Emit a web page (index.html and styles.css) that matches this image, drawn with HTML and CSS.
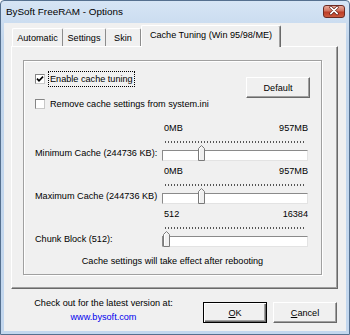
FILE: index.html
```html
<!DOCTYPE html>
<html>
<head>
<meta charset="utf-8">
<link rel="stylesheet" href="styles.css">
</head>
<body>
<div class="window">
  <div class="titlebar">
    <span class="title">BySoft FreeRAM - Options</span>
    <div class="close">
      <svg width="22" height="13" viewBox="0 0 22 13">
        <path d="M7.5 3 L14.5 10 M14.5 3 L7.5 10" stroke="#5a1a12" stroke-width="3.2" stroke-linecap="round"/>
        <path d="M7.5 3 L14.5 10 M14.5 3 L7.5 10" stroke="#fff" stroke-width="1.8" stroke-linecap="round"/>
      </svg>
    </div>
  </div>
  <div class="client">
    <div class="tabs">
      <div class="tab w1">Automatic</div>
      <div class="tab w2">Settings</div>
      <div class="tab w3">Skin</div>
      <div class="tab sel">Cache Tuning (Win 95/98/ME)</div>
    </div>
    <div class="panel">
      <div class="group">
        <div class="toprow">
          <div class="checks">
            <div class="check">
              <span class="box"><svg width="8" height="8" viewBox="0 0 8 8"><path d="M1 3.6 L3 5.8 L7 1.6" fill="none" stroke="#000" stroke-width="1.6"/></svg></span>
              <span class="focus">Enable cache tuning</span>
            </div>
            <div class="check second">
              <span class="box"></span>
              <span>Remove cache settings from system.ini</span>
            </div>
          </div>
          <div class="btn default">Default</div>
        </div>

        <div class="srow">
          <div class="slabel">Minimum Cache (244736 KB):</div>
          <div class="slider">
            <div class="scale"><span>0MB</span><span>957MB</span></div>
            <div class="ticks"></div>
            <div class="track">
              <svg class="thumb" style="left:35px" width="7" height="16" viewBox="0 0 7 16"><path d="M0.5 15.5 V3.5 L3.5 0.5 L6.5 3.5 V15.5 Z" fill="#f0f0f0" stroke="#7a7a7a"/><path d="M1.5 14.5 V3.9 L3.5 1.9" fill="none" stroke="#fff"/></svg>
            </div>
          </div>
        </div>

        <div class="srow">
          <div class="slabel">Maximum Cache (244736 KB)</div>
          <div class="slider">
            <div class="scale"><span>0MB</span><span>957MB</span></div>
            <div class="ticks"></div>
            <div class="track">
              <svg class="thumb" style="left:35px" width="7" height="16" viewBox="0 0 7 16"><path d="M0.5 15.5 V3.5 L3.5 0.5 L6.5 3.5 V15.5 Z" fill="#f0f0f0" stroke="#7a7a7a"/><path d="M1.5 14.5 V3.9 L3.5 1.9" fill="none" stroke="#fff"/></svg>
            </div>
          </div>
        </div>

        <div class="srow">
          <div class="slabel">Chunk Block (512):</div>
          <div class="slider">
            <div class="scale"><span>512</span><span>16384</span></div>
            <div class="ticks"></div>
            <div class="track">
              <svg class="thumb" style="left:0px" width="7" height="16" viewBox="0 0 7 16"><path d="M0.5 15.5 V3.5 L3.5 0.5 L6.5 3.5 V15.5 Z" fill="#f0f0f0" stroke="#7a7a7a"/><path d="M1.5 14.5 V3.9 L3.5 1.9" fill="none" stroke="#fff"/></svg>
            </div>
          </div>
        </div>

        <div class="note">Cache settings will take effect after rebooting</div>
      </div>
    </div>
    <div class="footer">
      <div class="info">
        <div>Check out for the latest version at:</div>
        <div class="link">www.bysoft.com</div>
      </div>
      <div class="btn ok"><span><u>O</u>K</span></div>
      <div class="btn cancel"><span><u>C</u>ancel</span></div>
    </div>
  </div>
</div>
</body>
</html>
```

FILE: styles.css
```css
html, body {
  margin: 0;
  padding: 0;
  background: #ffffff;
}

body {
  font-family: "Liberation Sans", Arial, sans-serif;
  font-size: 9.15px;
  color: #000;
}

.window {
  width: 350px;
  height: 335px;
  box-sizing: border-box;
  border: 1px solid #55708f;
  border-radius: 4px 4px 0 0;
  background: linear-gradient(#d6e5f5, #c2d6ec 40px, #c3d7ee);
  padding: 0 3px 3px 3px;
  display: flex;
  flex-direction: column;
}

.titlebar {
  height: 22px;
  flex: none;
  display: flex;
  align-items: center;
  justify-content: space-between;
}

.title {
  font-size: 9.9px;
  padding-left: 2px;
  padding-bottom: 1px;
  color: #000;
}

.close {
  width: 22px;
  height: 13px;
  margin-right: 1px;
  margin-bottom: 2px;
  box-sizing: border-box;
  border: 1px solid #6b2a22;
  border-radius: 3px;
  background: linear-gradient(#e9a99a, #d0705c 45%, #bd3d27 55%, #cc5b3f);
  display: flex;
  align-items: center;
  justify-content: center;
  overflow: hidden;
}

.close svg {
  display: block;
  margin-top: -1px;
}

.client {
  flex: 1;
  background: #f0f0f0;
  display: flex;
  flex-direction: column;
  border: 0;
}

/* tabs */
.tabs {
  height: 21px;
  margin: 2px 0 0 7px;
  padding-left: 1px;
  display: flex;
  align-items: flex-end;
}

.tab {
  height: 18px;
  box-sizing: border-box;
  border-top: 1px solid #fff;
  border-left: 1px solid #fff;
  border-right: 1px solid #8c8c8c;
  display: flex;
  align-items: center;
  justify-content: center;
  white-space: nowrap;
  border-radius: 2px 2px 0 0;
}

.w1 { width: 51px; }
.w2 { width: 43px; border-left: 0; }
.w3 { width: 35px; border-left: 0; }

.tab.sel {
  width: 140px;
  height: 22px;
  margin-bottom: -1px;
  padding-bottom: 3px;
  background: #f0f0f0;
  border-right: 1px solid #696969;
  box-shadow: inset -1px 0 0 #a0a0a0;
  position: relative;
  z-index: 1;
}

.panel {
  margin-left: 7px;
  width: 327px;
  height: 243px;
  box-sizing: border-box;
  border-top: 1px solid #fff;
  border-left: 1px solid #fff;
  border-right: 1px solid #696969;
  border-bottom: 1px solid #696969;
  box-shadow: inset -1px -1px 0 #a0a0a0;
  flex: none;
}

.group {
  margin: 13px 0 0 11px;
  width: 299px;
  height: 215px;
  box-sizing: border-box;
  border: 1px solid #a0a0a0;
  box-shadow: inset 1px 1px 0 #fff, 1px 1px 0 #fff;
  padding: 10px 11px 0 11px;
}

.toprow {
  height: 51px;
  display: flex;
  justify-content: space-between;
  align-items: flex-start;
}

.check {
  height: 15px;
  display: flex;
  align-items: center;
  white-space: nowrap;
}

.check.second {
  margin-top: 10px;
}

.box {
  width: 10px;
  height: 10px;
  box-sizing: border-box;
  border: 1px solid;
  border-color: #858585 #c8c8c8 #c8c8c8 #858585;
  background: #fff;
  margin-right: 5px;
  display: flex;
  align-items: center;
  justify-content: center;
  flex: none;
}

.box svg {
  display: block;
}

.focus {
  outline: 1px dotted #000;
  outline-offset: 0;
  padding: 1px 1px;
  margin-left: -1px;
  line-height: 12px;
}

.btn {
  box-sizing: border-box;
  width: 64px;
  height: 21px;
  background: #f0f0f0;
  border: 1px solid;
  border-color: #fff #696969 #696969 #fff;
  box-shadow: inset -1px -1px 0 #a0a0a0;
  display: flex;
  align-items: center;
  justify-content: center;
  white-space: nowrap;
}

.default {
  margin-top: 6px;
}

/* sliders */
.srow {
  height: 43px;
  display: grid;
  grid-template-columns: 127px 146px;
}

.slabel {
  margin-top: 25px;
  line-height: 13px;
  white-space: nowrap;
}

.slider {
  display: flex;
  flex-direction: column;
}

.scale {
  height: 13px;
  line-height: 13px;
  display: flex;
  justify-content: space-between;
  padding-left: 2px;
}

.ticks {
  height: 2px;
  margin: 6px 3px 0 3px;
  background: repeating-linear-gradient(90deg, #555 0, #555 1px, transparent 1px, transparent 3px);
}

.track {
  margin-top: 7px;
  height: 11px;
  box-sizing: border-box;
  border: 1px solid;
  border-color: #8a8a8a #e3e3e3 #e3e3e3 #8a8a8a;
  background: #fff;
  position: relative;
}

.thumb {
  position: absolute;
  top: -6px;
  display: block;
}

.note {
  margin-top: 4px;
  line-height: 13px;
  text-align: center;
  white-space: nowrap;
}

/* footer */
.footer {
  display: flex;
  align-items: flex-start;
  padding-top: 7px;
}

.info {
  margin-left: 29px;
  width: 141px;
  text-align: center;
  line-height: 14px;
  white-space: nowrap;
}

.link {
  color: #0000ee;
}

.ok {
  margin-left: 29px;
  margin-top: 6px;
  border: 1px solid #000;
  box-shadow: inset 1px 1px 0 #fff, inset -1px -1px 0 #696969, inset -2px -2px 0 #a0a0a0;
}

.cancel {
  margin-left: 6px;
  margin-top: 6px;
}
```
